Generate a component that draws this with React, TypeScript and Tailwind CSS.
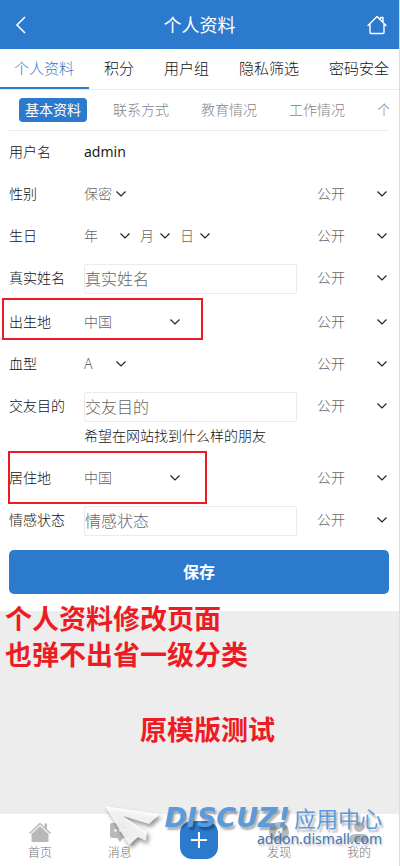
import type { ReactNode } from "react";

const TABS = ["个人资料", "积分", "用户组", "隐私筛选", "密码安全"];
const SUB_TABS = ["基本资料", "联系方式", "教育情况", "工作情况", "个人信息"];

function Chevron() {
  return (
    <svg
      className="pointer-events-none absolute right-[2px] top-1/2 -translate-y-1/2"
      width="10"
      height="6"
      viewBox="0 0 10 6"
      fill="none"
      stroke="#222"
      strokeWidth="1.2"
    >
      <path d="M0.5 0.5 L5 5 L9.5 0.5" />
    </svg>
  );
}

interface SelectProps {
  label: string;
  value: string;
  options?: string[];
  className: string;
}

function Select({ label, value, options = [], className }: SelectProps) {
  return (
    <div className={`relative h-7 shrink-0 ${className}`}>
      <select
        aria-label={label}
        defaultValue={value}
        className="block h-7 w-full appearance-none bg-transparent p-0 text-sm leading-7 text-[#666] outline-none"
      >
        {[value, ...options].map((o) => (
          <option key={o}>{o}</option>
        ))}
      </select>
      <Chevron />
    </div>
  );
}

interface RowProps {
  label: string;
  htmlFor?: string;
  isPublic?: boolean;
  mark?: ReactNode;
  children: ReactNode;
}

function Row({ label, htmlFor, isPublic = true, mark, children }: RowProps) {
  return (
    <div className="relative flex items-start py-[7px] text-sm leading-7">
      <label htmlFor={htmlFor} className="w-[75px] shrink-0">
        {label}
      </label>
      <div className="min-w-0 flex-1">{children}</div>
      {isPublic && (
        <Select label={`${label}可见范围`} value="公开" options={["好友可见", "保密"]} className="ml-5 w-[72px]" />
      )}
      {mark}
    </div>
  );
}

function TextField({ id, placeholder }: { id: string; placeholder: string }) {
  return (
    <input
      id={id}
      type="text"
      placeholder={placeholder}
      className="block h-[30px] w-full rounded-[2px] border border-[#ebebeb] p-0 text-base outline-none placeholder:text-[#666]"
    />
  );
}

function NavItem({ label, children }: { label: string; children: ReactNode }) {
  return (
    <a href="#" className="flex flex-1 flex-col items-center pt-[7px] text-xs text-[#757575]">
      <svg width="24" height="22" viewBox="0 0 24 22" fill="#b9b9b9">
        {children}
      </svg>
      <span className="mt-0.5 leading-4">{label}</span>
    </a>
  );
}

function Watermark() {
  return (
    <div className="pointer-events-none absolute right-[17px] bottom-[7px] flex items-start">
      <svg
        className="drop-shadow-[2px_3px_2px_rgba(0,0,0,0.5)]"
        width="60"
        height="54"
        viewBox="0 0 60 54"
      >
        <path d="M1 1 L56 9 L45 19 L19 11 L43 27 L42 36 L34 32 L25 40 Z" fill="#fff" opacity="0.85" />
        <path d="M19 11 L34 32 L25 40 Z" fill="#f2f2f2" opacity="0.6" />
      </svg>
      <div className="flex flex-col items-end">
        <div className="flex items-center text-[#5b9bdc] [text-shadow:2px_3px_2px_rgba(0,0,0,0.3)]">
          <span className="font-['DejaVu_Sans',sans-serif] text-[27px] leading-[26px] font-bold italic">DISCUZ!</span>
          <span className="ml-1 text-[22px] leading-[26px] font-normal">应用中心</span>
        </div>
        <span className="mt-px text-sm leading-[14px] font-normal text-[#3f78b4] [text-shadow:1px_2px_2px_rgba(0,0,0,0.25)]">
          addon.dismall.com
        </span>
      </div>
    </div>
  );
}

export default function App() {
  return (
    <div className="flex min-h-screen flex-col border-r border-[#dcdcdc] bg-[#ededed] font-['Noto_Sans','Noto_Sans_CJK_SC',sans-serif] font-light text-[#111]">
      <header className="flex h-[49px] items-center justify-between bg-[#2b7acd] px-3 text-white">
        <button type="button" aria-label="返回" className="w-5">
          <svg width="18" height="18" viewBox="0 0 18 18" fill="none" stroke="currentColor" strokeWidth="1.6">
            <path d="M13 1 L5 9 L13 17" />
          </svg>
        </button>
        <h1 className="text-lg font-normal">个人资料</h1>
        <a href="#" aria-label="首页">
          <svg
            width="20"
            height="20"
            viewBox="0 0 20 20"
            fill="none"
            stroke="currentColor"
            strokeWidth="1.4"
            strokeLinejoin="round"
            strokeLinecap="round"
          >
            <path d="M1 10.5 L10 1.5 L19 10.5 M3 9.5 V17.5 Q3 18.5 4 18.5 H16 Q17 18.5 17 17.5 V9.5 M13.5 4.5 V2.5 H16 V7" />
          </svg>
        </a>
      </header>

      <main className="bg-white pb-[17px]">
        <nav className="flex h-[41px] overflow-hidden border-b border-[#ebebeb] text-[15px]">
          {TABS.map((tab, i) => (
            <a
              key={tab}
              href="#"
              className={`h-[40px] shrink-0 px-[15px] leading-[38px] whitespace-nowrap ${
                i === 0 ? "border-b-2 border-[#2b7acd] pl-[14px] text-[#2b7acd]" : ""
              }`}
            >
              {tab}
            </a>
          ))}
        </nav>

        <div className="pr-[10px] pl-[9px]">
          <nav className="flex h-[41px] items-center overflow-hidden border-b border-[#ebebeb] text-sm">
            {SUB_TABS.map((tab, i) => (
              <a
                key={tab}
                href="#"
                className={`mx-[10px] shrink-0 rounded px-[6px] leading-6 whitespace-nowrap ${
                  i === 0 ? "bg-[#2b7acd] font-normal text-white" : "text-[#858585]"
                }`}
              >
                {tab}
              </a>
            ))}
          </nav>

          <form>
            <Row label="用户名" isPublic={false}>
              <span className="font-normal text-[#222]">admin</span>
            </Row>
            <Row label="性别">
              <Select label="性别" value="保密" options={["男", "女"]} className="w-[44px]" />
            </Row>
            <Row label="生日">
              <div className="flex gap-2">
                <Select label="年" value="年" className="w-12" />
                <Select label="月" value="月" className="w-8" />
                <Select label="日" value="日" className="w-8" />
              </div>
            </Row>
            <Row label="真实姓名" htmlFor="realname">
              <TextField id="realname" placeholder="真实姓名" />
            </Row>
            <Row
              label="出生地"
              mark={<div className="pointer-events-none absolute -top-[3px] -left-[7px] h-[42px] w-[201px] border-2 border-[#ed1c24]" />}
            >
              <Select label="出生地" value="中国" className="w-[98px]" />
            </Row>
            <Row label="血型">
              <Select label="血型" value="A" options={["B", "AB", "O"]} className="w-[44px]" />
            </Row>
            <Row label="交友目的" htmlFor="lookingfor">
              <TextField id="lookingfor" placeholder="交友目的" />
              <p>希望在网站找到什么样的朋友</p>
            </Row>
            <Row
              label="居住地"
              mark={<div className="pointer-events-none absolute -top-[6px] -left-px h-[53px] w-[199px] border-2 border-[#ed1c24]" />}
            >
              <Select label="居住地" value="中国" className="w-[98px]" />
            </Row>
            <Row label="情感状态" htmlFor="affective">
              <TextField id="affective" placeholder="情感状态" />
            </Row>
            <button type="submit" className="mt-[7px] block h-11 w-full rounded-[5px] bg-[#2b7acd] text-base font-bold text-white">
              保存
            </button>
          </form>
        </div>
      </main>

      <section className="-mt-[10px] flex-1 px-[5px] text-[27px] leading-9 font-bold text-[#ed1c24]">
        <p>个人资料修改页面</p>
        <p>也弹不出省一级分类</p>
        <p className="mt-[39px] ml-[135px]">原模版测试</p>
      </section>

      <footer className="sticky bottom-0">
        <nav className="flex h-[52px] bg-white">
          <NavItem label="首页">
            <path d="M1 12 L12 1.5 L16.5 6 V2.5 H19 V8 L23 12 L22 13 L12 3.5 L2 13 Z" />
            <path d="M3.5 13 L12 5 L20.5 13 V20 Q20.5 21 19.5 21 H4.5 Q3.5 21 3.5 20 Z" />
          </NavItem>
          <NavItem label="消息">
            <path d="M4 2 H20 Q22 2 22 4 V15 Q22 17 20 17 H15 L12 21 L9 17 H4 Q2 17 2 15 V4 Q2 2 4 2 Z" />
            <g fill="#fff">
              <circle cx="7.5" cy="9.5" r="1.3" />
              <circle cx="12" cy="9.5" r="1.3" />
              <circle cx="16.5" cy="9.5" r="1.3" />
            </g>
          </NavItem>
          <div className="flex flex-1 justify-center pt-[7px]">
            <button type="button" aria-label="发布" className="flex h-[38px] w-[38px] items-center justify-center rounded-xl bg-[#2b7acd]">
              <svg width="18" height="18" viewBox="0 0 18 18" stroke="#fff" strokeWidth="2">
                <path d="M9 1 V17 M1 9 H17" />
              </svg>
            </button>
          </div>
          <NavItem label="发现">
            <circle cx="12" cy="11" r="10" />
            <path d="M16.5 6 L14 13 L7.5 16 L10 9 Z" fill="#fff" />
            <circle cx="12" cy="11" r="1.5" />
          </NavItem>
          <NavItem label="我的">
            <circle cx="12" cy="6" r="5" />
            <path d="M2.5 21 V18 Q3 13 9 13 H15 Q21 13 21.5 18 V21 Z" />
          </NavItem>
        </nav>
        <Watermark />
      </footer>
    </div>
  );
}
